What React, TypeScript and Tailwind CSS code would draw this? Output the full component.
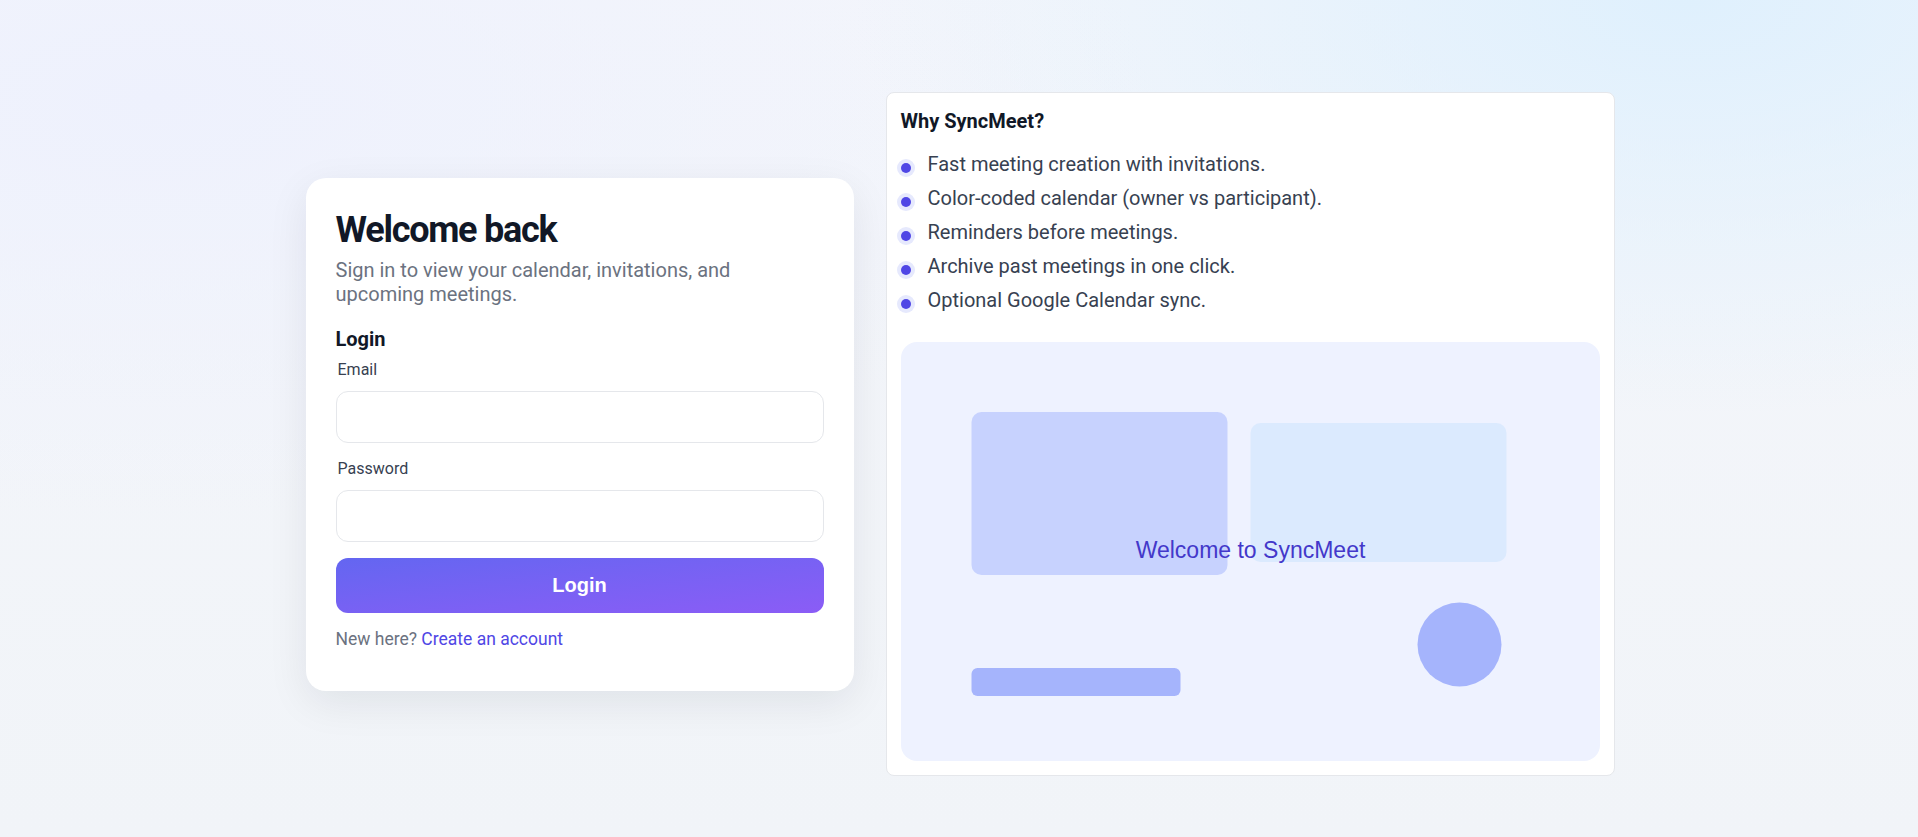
const FEATURES = [
  'Fast meeting creation with invitations.',
  'Color-coded calendar (owner vs participant).',
  'Reminders before meetings.',
  'Archive past meetings in one click.',
  'Optional Google Calendar sync.',
]

function Field({ label, type }: { label: string; type: string }) {
  return (
    <div className="flex flex-col">
      <label className="pl-0.5 text-base leading-6 text-[#374151] mb-[9px]">{label}</label>
      <input
        type={type}
        className="h-[52px] w-full rounded-xl border border-[#e5e7eb] bg-white px-4 text-base outline-none"
      />
    </div>
  )
}

function LoginCard() {
  return (
    <div className="w-[548px] rounded-[20px] bg-white px-[30px] pt-8 pb-10 shadow-[0_12px_40px_rgba(15,23,42,0.08)]">
      <h1 className="text-4xl leading-10 font-bold tracking-[-0.035em] text-[#111827]">Welcome back</h1>
      <p className="mt-2 text-xl leading-6 text-[#6b7280]">
        Sign in to view your calendar, invitations, and
        <br />
        upcoming meetings.
      </p>
      <h2 className="mt-[19px] text-xl leading-7 font-bold text-[#111827]">Login</h2>
      <div className="mt-[5px] flex flex-col gap-[14px]">
        <Field label="Email" type="email" />
        <Field label="Password" type="password" />
      </div>
      <button
        className="mt-4 h-[55px] w-full rounded-xl bg-gradient-to-br from-[#6366f1] to-[#8b5cf6] text-xl font-bold text-white"
        style={{ fontFamily: '"Liberation Sans", Arial, sans-serif' }}
      >
        Login
      </button>
      <p className="mt-3.5 text-[17.5px] leading-6 text-[#6b7280]">
        New here? <a className="text-[#4f46e5]">Create an account</a>
      </p>
    </div>
  )
}

function Illustration() {
  return (
    <div className="mt-[28px] h-[419px] rounded-2xl bg-[#eef2ff]">
      <svg viewBox="0 0 698 419" className="h-full w-full">
        <rect x="70" y="70" width="256" height="163" rx="10" fill="#c7d2fe" />
        <rect x="349" y="81" width="256" height="139" rx="10" fill="#dbeafe" />
        <circle cx="558" cy="302.5" r="42" fill="#a5b4fc" />
        <rect x="70" y="326" width="209" height="28" rx="6" fill="#a5b4fc" />
        <text
          x="349"
          y="216"
          textAnchor="middle"
          fontSize="23"
          fill="#4338ca"
          fontFamily='"Liberation Sans", Arial, sans-serif'
        >
          Welcome to SyncMeet
        </text>
      </svg>
    </div>
  )
}

function WhyCard() {
  return (
    <div className="w-[729px] rounded-lg border border-[#e5e7eb] bg-white p-3.5">
      <h3 className="text-xl leading-7 font-bold text-[#111827]">Why SyncMeet?</h3>
      <ul className="mt-[15px] flex flex-col gap-1.5">
        {FEATURES.map((f) => (
          <li key={f} className="flex items-start gap-[17px]">
            <span className="mt-[13px] h-2.5 w-2.5 shrink-0 rounded-full bg-[#4f46e5] ring-4 ring-[#e6e9fd]" />
            <span className="text-xl leading-7 text-[#374151]">{f}</span>
          </li>
        ))}
      </ul>
      <Illustration />
    </div>
  )
}

export default function App() {
  return (
    <div
      className="min-h-screen w-full bg-[image:radial-gradient(ellipse_at_88%_0%,#dff0fd_0%,rgba(223,240,253,0)_35%),radial-gradient(ellipse_at_8%_12%,#eef1fd_0%,rgba(238,241,253,0)_40%),linear-gradient(180deg,#f4f6fb_0%,#f1f4f8_100%)] pt-[92px] pb-[61px]"
      style={{ fontFamily: 'Roboto, "Noto Sans", sans-serif' }}
    >
      <div className="flex items-center justify-center gap-8 pl-[2px]">
        <LoginCard />
        <WhyCard />
      </div>
    </div>
  )
}
